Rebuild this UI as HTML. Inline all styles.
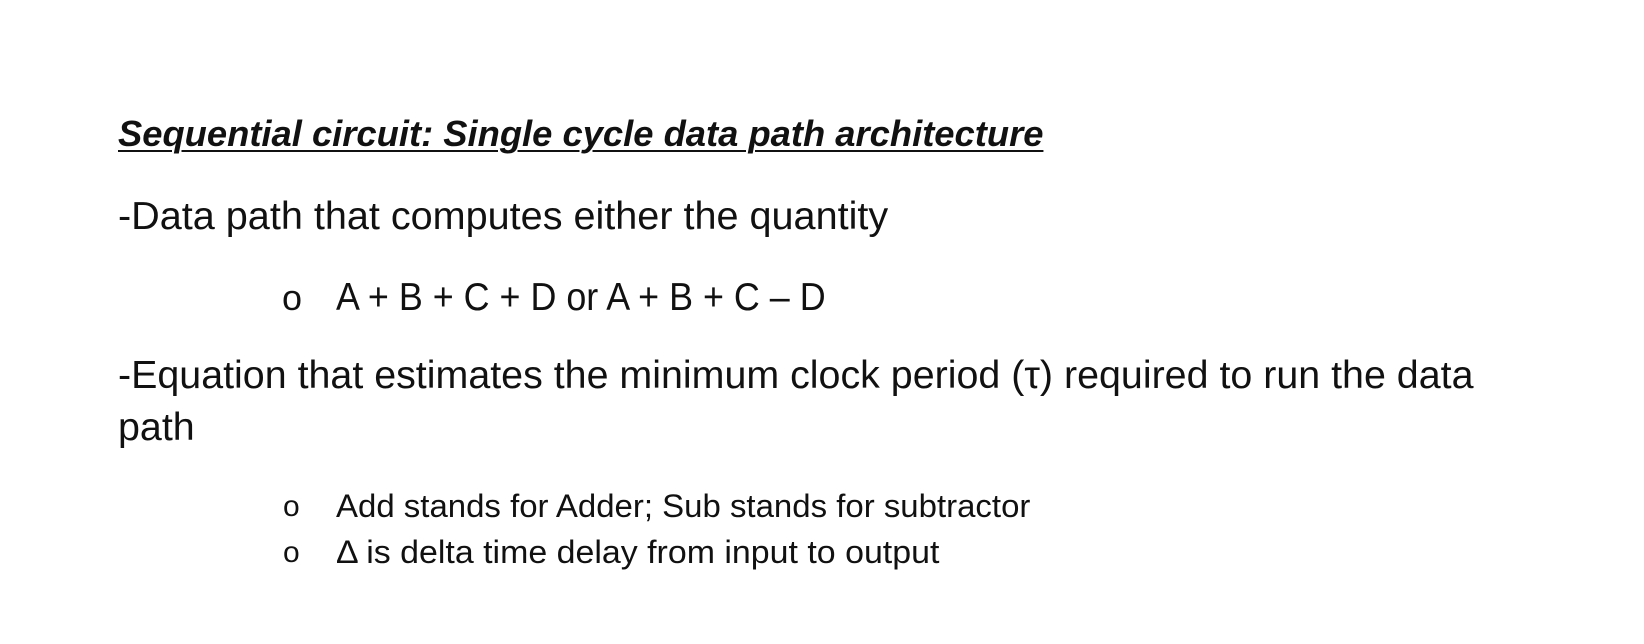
<!DOCTYPE html>
<html><head><meta charset="utf-8"><style>
html,body{margin:0;padding:0;background:#fff;width:1644px;height:644px;overflow:hidden}
.t{position:absolute;white-space:nowrap;font-family:"Liberation Sans",sans-serif;color:#111;transform-origin:0 100%;line-height:1}
</style></head><body>
<div class="t" style="left:118px;top:116px;font-size:36px;font-weight:bold;font-style:italic;text-decoration:underline;text-decoration-thickness:2px;text-underline-offset:4px;transform:scaleX(1.01)">Sequential circuit: Single cycle data path architecture</div>
<div class="t" style="left:118px;top:197px;font-size:39px;transform:scaleX(1.015)">-Data path that computes either the quantity</div>
<div class="t" style="left:282px;top:280px;font-size:36px">o</div>
<div class="t" style="left:336px;top:278px;font-size:39px;transform:scaleX(0.92)">A + B + C + D or A + B + C – D</div>
<div class="t" style="left:118px;top:356px;font-size:39px;transform:scaleX(1.01)">-Equation that estimates the minimum clock period (τ) required to run the data</div>
<div class="t" style="left:118px;top:408px;font-size:39px;transform:scaleX(1.01)">path</div>
<div class="t" style="left:283px;top:492px;font-size:30px">o</div>
<div class="t" style="left:336px;top:490px;font-size:32px;transform:scaleX(1.03)">Add stands for Adder; Sub stands for subtractor</div>
<div class="t" style="left:283px;top:538px;font-size:30px">o</div>
<div class="t" style="left:336px;top:536px;font-size:32px;transform:scaleX(1.06)">Δ is delta time delay from input to output</div>
</body></html>
